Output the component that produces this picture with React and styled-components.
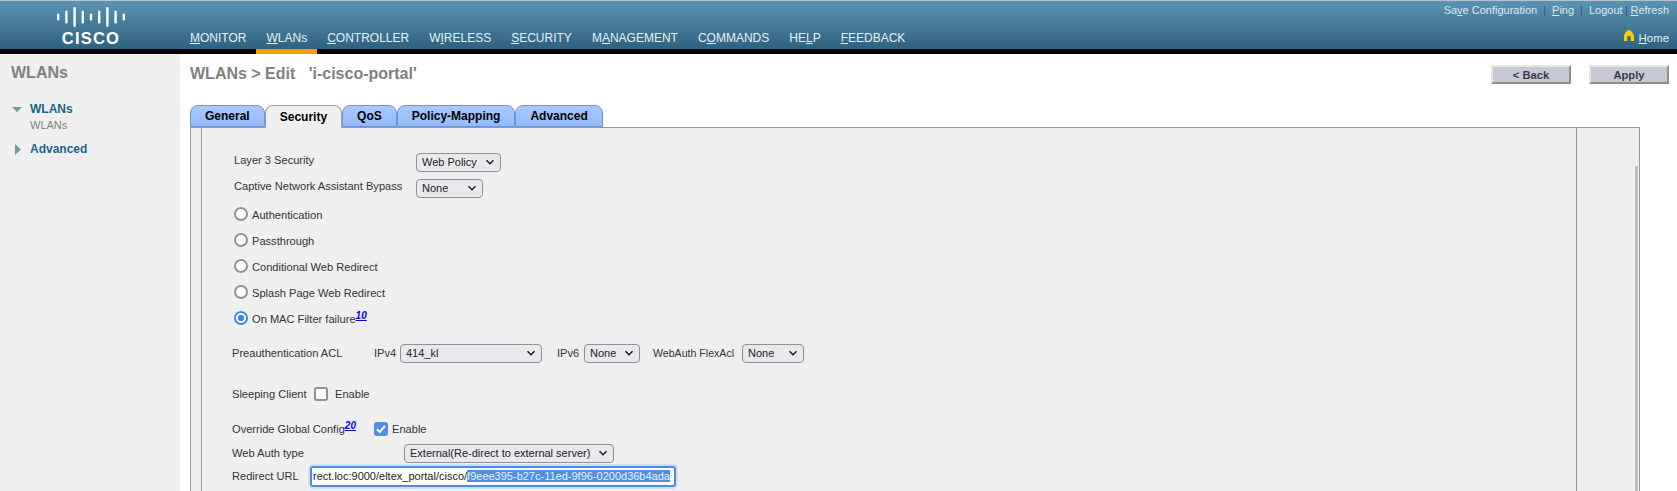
import React from "react";
import styled, { createGlobalStyle } from "styled-components";

const GlobalStyle = createGlobalStyle`
  html, body {
    margin: 0;
    height: 100%;
    overflow: hidden;
    background: #fff;
    font-family: "Liberation Sans", Arial, sans-serif;
  }
`;

const chevron =
  "url(\"data:image/svg+xml,%3Csvg xmlns='http://www.w3.org/2000/svg' width='10' height='10' viewBox='0 0 10 10'%3E%3Cpath d='M1.5 3.2 5 6.7l3.5-3.5' fill='none' stroke='%23222' stroke-width='1.6'/%3E%3C/svg%3E\")";
const tick =
  "url(\"data:image/svg+xml,%3Csvg xmlns='http://www.w3.org/2000/svg' width='14' height='14' viewBox='0 0 14 14'%3E%3Cpath d='M3 7.2 5.8 10 11 3.8' fill='none' stroke='%23fff' stroke-width='2'/%3E%3C/svg%3E\")";

const Page = styled.div`
  width: 1677px;
  height: 491px;
  display: flex;
  flex-direction: column;
  overflow: hidden;
`;

const Header = styled.header`
  height: 48px;
  flex: none;
  display: flex;
  background: linear-gradient(#5b94b3, #30617f);
  border-top: 1px solid #b4c4cc;
  border-bottom: 5px solid #000;
`;

const LogoBox = styled.div`
  width: 190px;
  flex: none;
  display: flex;
  flex-direction: column;
  align-items: center;
  padding: 6px 9px 0 0;
  box-sizing: border-box;
`;

const LogoText = styled.div`
  font-size: 16.5px;
  line-height: 14px;
  font-weight: 700;
  letter-spacing: 1.2px;
  color: #fff;
  margin-top: 4px;
  padding-left: 1px;
`;

const Nav = styled.nav`
  display: flex;
  align-items: flex-end;
  gap: 20px;
  padding-bottom: 4px;
`;

const NavItem = styled.span`
  font-size: 12px;
  line-height: 14px;
  color: #e4f0f6;
  position: relative;
`;

const ActiveMark = styled.span`
  position: absolute;
  left: -10px;
  right: -10px;
  top: 18px;
  height: 5px;
  background: #f90;
`;

const HeaderRight = styled.div`
  margin-left: auto;
  display: flex;
  flex-direction: column;
  justify-content: space-between;
  align-items: flex-end;
  padding: 2px 8px 4px 0;
`;

const TopLinks = styled.div`
  display: flex;
  font-size: 11px;
  line-height: 14px;
  color: #dbe9f0;
`;

const Sep = styled.span`
  color: #3a4f86;
  margin: ${(p) => p.$m || "0 6px"};
`;

const HomeLink = styled.div`
  display: flex;
  align-items: center;
  gap: 5px;
  font-size: 11.4px;
  line-height: 14px;
  color: #e4f0f6;
`;

const HomeIcon = styled.svg`
  width: 10px;
  height: 11px;
  margin-bottom: 4px;
`;

const Body = styled.div`
  flex: 1;
  display: flex;
  min-height: 0;
`;

const Sidebar = styled.aside`
  width: 180px;
  flex: none;
  background: #efefef;
  padding: 10px 0 0 10px;
  box-sizing: border-box;
`;

const SideTitle = styled.div`
  font-size: 16px;
  line-height: 18px;
  font-weight: 700;
  color: #808080;
  margin: 0 0 20px 1px;
`;

const SideGroup = styled.div`
  display: flex;
  align-items: center;
  gap: 8px;
  font-size: 12px;
  line-height: 14px;
  font-weight: 700;
  color: #1b6688;
`;

const SideSub = styled.div`
  font-size: 11px;
  line-height: 13px;
  color: #808080;
  margin: 3px 0 10px 20px;
`;

const Main = styled.main`
  flex: 1;
  min-width: 0;
  padding: 0 8px 0 10px;
  display: flex;
  flex-direction: column;
`;

const TitleRow = styled.div`
  height: 51px;
  flex: none;
  display: flex;
  align-items: flex-start;
  justify-content: space-between;
`;

const PageTitle = styled.h1`
  margin: 11px 0 0;
  font-size: 16px;
  line-height: 18px;
  font-weight: 700;
  color: #808080;
  white-space: pre;
`;

const Buttons = styled.div`
  display: flex;
  gap: 18px;
  padding-top: 11px;
`;

const Button = styled.button`
  width: 80px;
  height: 19px;
  padding: 0;
  box-sizing: border-box;
  border: 2px solid;
  border-color: #e6e6e6 #8e8e8e #8e8e8e #e6e6e6;
  background: #c6c9d4;
  font: 700 11.2px "Liberation Sans", sans-serif;
  color: #3b3b4b;
`;

const TabBar = styled.div`
  display: flex;
  height: 22px;
  flex: none;
`;

const Tab = styled.div`
  display: flex;
  align-items: center;
  box-sizing: border-box;
  padding: 0 14px;
  height: ${(p) => (p.$active ? "23px" : "22px")};
  position: relative;
  z-index: ${(p) => (p.$active ? 1 : 0)};
  font-size: 12px;
  font-weight: 700;
  color: #000;
  border: 1px solid ${(p) => (p.$active ? "#a0a0a0" : "#6d94cf")};
  border-bottom: ${(p) => (p.$active ? "none" : "1px solid #6d94cf")};
  border-radius: 8px 8px 0 0;
  background: ${(p) => (p.$active ? "#efefef" : "linear-gradient(#a9c9fb, #92bafc)")};
`;

const Panel = styled.section`
  flex: 1;
  min-height: 0;
  width: 1450px;
  box-sizing: border-box;
  display: flex;
  border: 1px solid #9a9a9a;
  border-bottom: none;
  background: #efefef;
  position: relative;
`;

const LeftStrip = styled.div`
  width: 11px;
  box-sizing: border-box;
  flex: none;
  border-right: 1px solid #9a9a9a;
`;

const Form = styled.div`
  width: 1375px;
  flex: none;
  border-right: 1px solid #9a9a9a;
  padding: 21px 0 0 32px;
  box-sizing: border-box;
  font-size: 11.1px;
  color: #333;
`;

const Thumb = styled.div`
  position: absolute;
  right: 1px;
  top: 38px;
  bottom: 0;
  width: 3px;
  background: #c0c0c8;
`;

const Row = styled.div`
  display: flex;
  align-items: center;
  height: ${(p) => p.$h || 26}px;
  margin-left: ${(p) => p.$ml || 0}px;
  margin-top: ${(p) => p.$mt || 0}px;
`;

const Label = styled.label`
  display: block;
  width: ${(p) => (p.$w ? p.$w + "px" : "auto")};
  flex: none;
  margin-right: ${(p) => p.$mr || 0}px;
  padding-bottom: ${(p) => p.$raise || 0}px;
  font-size: ${(p) => (p.$fs ? p.$fs + "px" : "inherit")};
`;

const Select = styled.select`
  appearance: none;
  width: ${(p) => p.$w}px;
  height: 19px;
  box-sizing: border-box;
  padding: 0 0 0 5px;
  margin: 0 ${(p) => p.$mr || 0}px 0 0;
  border: 1px solid #8f8f9d;
  border-radius: 4px;
  background: #e9e9ed ${chevron} no-repeat right 5px center;
  font: 11px "Liberation Sans", sans-serif;
  color: #222;
`;

const Radio = styled.input.attrs({ type: "radio" })`
  appearance: none;
  width: 14px;
  height: 14px;
  margin: 0 4px 2px 0;
  box-sizing: border-box;
  border-radius: 50%;
  border: 2px solid #8f8f9d;
  background: #fff;

  &:checked {
    border-color: #3f8ae2;
    background: radial-gradient(circle, #3f8ae2 0 3px, #fff 3.5px);
  }
`;

const Check = styled.input.attrs({ type: "checkbox" })`
  appearance: none;
  width: 14px;
  height: 14px;
  margin: 0 ${(p) => p.$mr || 7}px 0 0;
  box-sizing: border-box;
  border-radius: 3px;
  border: 2px solid #8f8f9d;
  background: #fff;

  &:checked {
    border: none;
    background: #4a8fe3 ${tick} center no-repeat;
  }
`;

const Note = styled.a`
  font-size: 10px;
  line-height: 0;
  font-weight: 700;
  font-style: italic;
  color: #00e;
  text-decoration: underline;
  vertical-align: 4px;
`;

const UrlBox = styled.div`
  width: 366px;
  height: 21px;
  box-sizing: border-box;
  padding: 0 0 0 1px;
  display: flex;
  align-items: center;
  overflow: hidden;
  white-space: nowrap;
  background: #fff;
  border: 2px solid #4a8de0;
  border-radius: 3px;
  box-shadow: 0 0 0 2px #cfe0f5;
  font-size: 11px;
  color: #222;
`;

const Selected = styled.span`
  background: #4f8fe3;
  color: #e8f1fc;
`;

const bars = [
  [0, 7],
  [8.2, 13],
  [16.4, 20],
  [24.6, 13],
  [32.8, 7],
  [41, 13],
  [49.2, 20],
  [57.4, 13],
  [65.6, 7],
];

const Logo = () => (
  <svg width="68" height="20" viewBox="0 0 68 20" fill="#fff">
    {bars.map(([x, h]) => (
      <rect key={x} x={x} y={(20 - h) / 2} width="2.4" height={h} rx="1.2" />
    ))}
  </svg>
);

const Home = () => (
  <HomeIcon viewBox="0 0 10 11">
    <path d="M5 0C6.2 0 10 3.6 10 5.5V11H6.8V7.6a1.8 1.8 0 0 0-3.6 0V11H0V5.5C0 3.6 3.8 0 5 0z" fill="#fc0" />
  </HomeIcon>
);

const Caret = ({ open }) => (
  <svg width="12" height="11" viewBox="0 0 12 11" fill="#6a9a9f">
    {open ? <path d="M2 3h10L7 8z" /> : <path d="M5 0l6 5.5L5 11z" />}
  </svg>
);

const navItems = [
  ["", "M", "ONITOR"],
  ["", "W", "LANs"],
  ["", "C", "ONTROLLER"],
  ["W", "I", "RELESS"],
  ["", "S", "ECURITY"],
  ["M", "A", "NAGEMENT"],
  ["C", "O", "MMANDS"],
  ["HE", "L", "P"],
  ["", "F", "EEDBACK"],
];

const radios = ["Authentication", "Passthrough", "Conditional Web Redirect", "Splash Page Web Redirect"];

export default function App() {
  return (
    <Page>
      <GlobalStyle />
      <Header>
        <LogoBox>
          <Logo />
          <LogoText>CISCO</LogoText>
        </LogoBox>
        <Nav>
          {navItems.map(([a, u, b], i) => (
            <NavItem key={i}>
              {a}
              <u>{u}</u>
              {b}
              {i === 1 && <ActiveMark />}
            </NavItem>
          ))}
        </Nav>
        <HeaderRight>
          <TopLinks>
            <span>
              Sa<u>v</u>e Configuration
            </span>
            <Sep>|</Sep>
            <span>
              <u>P</u>ing
            </span>
            <Sep>|</Sep>
            <span>Logout</span>
            <Sep $m="0 2.5px">|</Sep>
            <span>
              <u>R</u>efresh
            </span>
          </TopLinks>
          <HomeLink>
            <Home />
            <span>
              <u>H</u>ome
            </span>
          </HomeLink>
        </HeaderRight>
      </Header>
      <Body>
        <Sidebar>
          <SideTitle>WLANs</SideTitle>
          <SideGroup>
            <Caret open />
            WLANs
          </SideGroup>
          <SideSub>WLANs</SideSub>
          <SideGroup>
            <Caret />
            Advanced
          </SideGroup>
        </Sidebar>
        <Main>
          <TitleRow>
            <PageTitle>WLANs &gt; Edit   'i-cisco-portal'</PageTitle>
            <Buttons>
              <Button>&lt; Back</Button>
              <Button>Apply</Button>
            </Buttons>
          </TitleRow>
          <TabBar>
            <Tab>General</Tab>
            <Tab $active>Security</Tab>
            <Tab>QoS</Tab>
            <Tab>Policy-Mapping</Tab>
            <Tab>Advanced</Tab>
          </TabBar>
          <Panel>
            <LeftStrip />
            <Form>
              <Row>
                <Label $w={182} $raise={4}>Layer 3 Security</Label>
                <Select $w={85}>
                  <option>Web Policy</option>
                </Select>
              </Row>
              <Row>
                <Label $w={182} $raise={4}>Captive Network Assistant Bypass</Label>
                <Select $w={67}>
                  <option>None</option>
                </Select>
              </Row>
              {radios.map((r, i) => (
                <Row key={r} $mt={i === 0 ? 1 : 0}>
                  <Radio name="l3" />
                  <Label>{r}</Label>
                </Row>
              ))}
              <Row>
                <Radio name="l3" defaultChecked />
                <Label>
                  On MAC Filter failure<Note>10</Note>
                </Label>
              </Row>
              <Row $ml={-2} $mt={11} $h={20}>
                <Label $w={142}>Preauthentication ACL</Label>
                <Label $w={26}>IPv4</Label>
                <Select $w={142} $mr={15}>
                  <option>414_kl</option>
                </Select>
                <Label $w={27}>IPv6</Label>
                <Select $w={56} $mr={13}>
                  <option>None</option>
                </Select>
                <Label $w={89} $fs={10.6}>WebAuth FlexAcl</Label>
                <Select $w={62}>
                  <option>None</option>
                </Select>
              </Row>
              <Row $ml={-2} $mt={21} $h={20}>
                <Label $w={82}>Sleeping Client</Label>
                <Check />
                <Label>Enable</Label>
              </Row>
              <Row $ml={-2} $mt={15} $h={20}>
                <Label $w={142}>
                  Override Global Config<Note>20</Note>
                </Label>
                <Check $mr={4} defaultChecked />
                <Label>Enable</Label>
              </Row>
              <Row $ml={-2} $mt={4} $h={20}>
                <Label $w={172}>Web Auth type</Label>
                <Select $w={210}>
                  <option>External(Re-direct to external server)</option>
                </Select>
              </Row>
              <Row $ml={-2} $mt={3} $h={20}>
                <Label $w={78}>Redirect URL</Label>
                <UrlBox>
                  rect.loc:9000/eltex_portal/cisco/<Selected>f9eee395-b27c-11ed-9f96-0200d36b4ada</Selected>
                </UrlBox>
              </Row>
            </Form>
            <Thumb />
          </Panel>
        </Main>
      </Body>
    </Page>
  );
}
